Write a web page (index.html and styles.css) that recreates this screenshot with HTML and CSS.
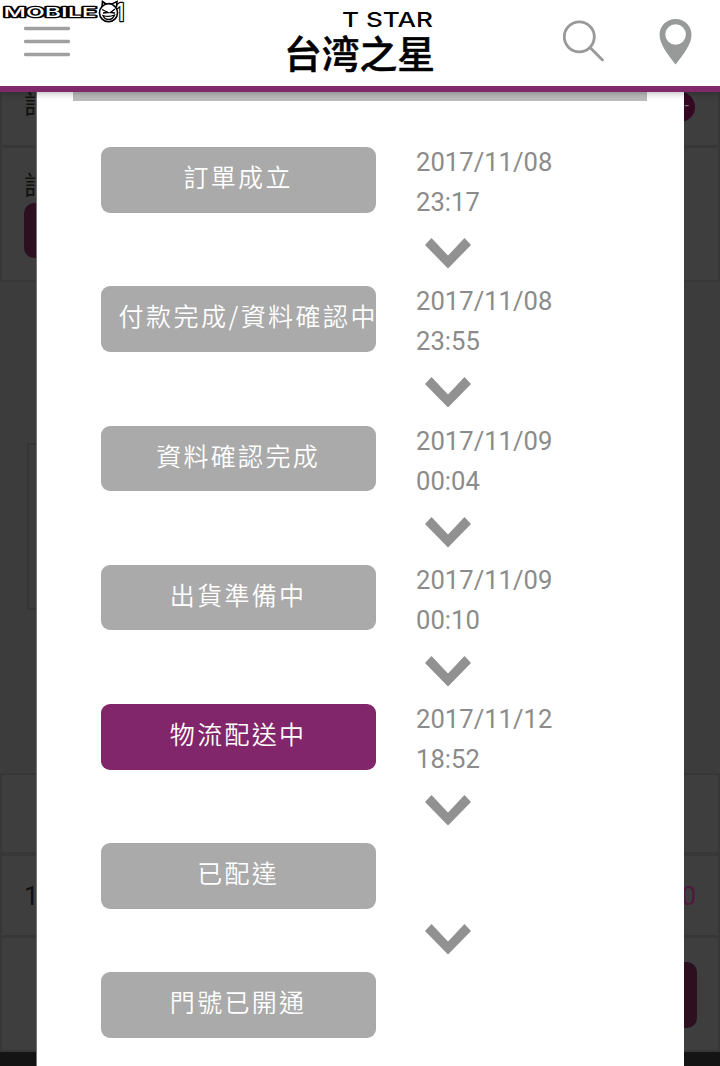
FILE: index.html
```html
<!DOCTYPE html>
<html lang="zh-Hant">
<head>
<meta charset="utf-8">
<title>台灣之星</title>
<link rel="stylesheet" href="styles.css">
</head>
<body>
<div class="screen">
  <header class="header">
    <svg class="menu" width="50" height="34" viewBox="0 0 50 34"><path d="M3.500 4.500H46.500M3.500 17.500H46.500M3.500 30.500H46.500"/></svg>
    <svg class="brand" width="160" height="70" viewBox="0 0 160 70">
      <text class="brand-en" x="62" y="17.300" textLength="91" lengthAdjust="spacingAndGlyphs">T STAR</text>
      <text class="brand-zh" x="4" y="58.300" textLength="151" lengthAdjust="spacingAndGlyphs">台湾之星</text>
    </svg>
    <svg class="search" width="46" height="46" viewBox="0 0 46 46"><circle cx="18.300" cy="18.800" r="15"/><path d="M29 29.500L41.500 42"/></svg>
    <svg class="pin" width="34" height="48" viewBox="0 0 34 48"><path fill-rule="evenodd" d="M16.600 1C7.500 1 .6 8 .6 16.700C.6 26 8 35.500 16.600 46.500C25.200 35.500 32.500 26 32.500 16.700C32.500 8 25.700 1 16.600 1ZM16.600 6.200A10.300 10.300 0 1 1 16.600 26.800A10.300 10.300 0 1 1 16.600 6.200Z"/></svg>
    <svg class="watermark" width="136" height="30" viewBox="0 0 136 30">
      <text class="wm-text" x="3.500" y="16.600" textLength="93" lengthAdjust="spacingAndGlyphs">MOBILE</text>
      <text class="wm-one" x="115.500" y="20.500" textLength="9" lengthAdjust="spacingAndGlyphs">1</text>
      <g class="mascot">
        <path d="M102 7L102.500 1.500L106 4Q109 3 112 4L117 1.500L116.500 7"/>
        <circle cx="108.500" cy="12.700" r="9"/>
        <path class="face" d="M102 9.500L108 12.500L103 13M115 9L110.500 12.500L115 13M103 15.500Q109 17.500 114.500 15Q113 19.500 108.500 19.500Q104.500 19.500 103 15.500Z"/>
      </g>
    </svg>
  </header>

  <main class="page">
    <section class="cell cell-first"><span class="label">訂</span><span class="round">-</span></section>
    <section class="cell cell-order"><span class="label">訂</span><span class="button-left"></span></section>
    <section class="gap"><div class="frame"></div></section>
    <section class="cell cell-head"></section>
    <section class="cell cell-item"><span class="count">1</span><span class="price">0</span></section>
    <section class="cell cell-action"><span class="button-right"></span></section>
    <footer class="foot"></footer>
  </main>

  <div class="modal">
    <div class="modal-strip"></div>
    <ol class="steps">
      <li class="step"><div class="status">訂單成立</div><div class="meta"><div class="time">2017/11/08<br>23:17</div><svg class="chevron" width="46" height="31"><path d="M0 7L6.500 0L23 17.500L39.500 0L46 7L23 30.500Z"/></svg></div></li>
      <li class="step"><div class="status status-long">付款完成/資料確認中</div><div class="meta"><div class="time">2017/11/08<br>23:55</div><svg class="chevron" width="46" height="31"><path d="M0 7L6.500 0L23 17.500L39.500 0L46 7L23 30.500Z"/></svg></div></li>
      <li class="step"><div class="status">資料確認完成</div><div class="meta"><div class="time">2017/11/09<br>00:04</div><svg class="chevron" width="46" height="31"><path d="M0 7L6.500 0L23 17.500L39.500 0L46 7L23 30.500Z"/></svg></div></li>
      <li class="step"><div class="status">出貨準備中</div><div class="meta"><div class="time">2017/11/09<br>00:10</div><svg class="chevron" width="46" height="31"><path d="M0 7L6.500 0L23 17.500L39.500 0L46 7L23 30.500Z"/></svg></div></li>
      <li class="step"><div class="status status-current">物流配送中</div><div class="meta"><div class="time">2017/11/12<br>18:52</div><svg class="chevron" width="46" height="31"><path d="M0 7L6.500 0L23 17.500L39.500 0L46 7L23 30.500Z"/></svg></div></li>
      <li class="step"><div class="status">已配達</div><div class="meta"><div class="time"></div><svg class="chevron" width="46" height="31"><path d="M0 7L6.500 0L23 17.500L39.500 0L46 7L23 30.500Z"/></svg></div></li>
      <li class="step"><div class="status">門號已開通</div></li>
    </ol>
  </div>
</div>
</body>
</html>
```
FILE: styles.css
```css
* { box-sizing: border-box; }
body { margin: 0; font-family: Roboto, "Noto Sans CJK TC", sans-serif; }
.screen { position: relative; width: 720px; height: 1066px; overflow: hidden; background: #3c3c3c; display: flex; flex-direction: column; }

/* header */
.header { position: relative; z-index: 3; flex: none; height: 92px; display: flex; align-items: flex-start; background: #fff; border-bottom: 6px solid #80296b; box-shadow: 0 1px 7px rgba(0,0,0,.3); }
.menu { margin: 24px 0 0 22px; }
.menu path { fill: none; stroke: #a0a0a0; stroke-width: 3.4; stroke-linecap: round; }
.brand { margin: 10px 0 0 208px; }
.brand-en { font: 500 20px Inter, sans-serif; }
.brand-zh { font: 500 37.500px "Noto Sans CJK JP", sans-serif; stroke: #000; stroke-width: .5; stroke-linejoin: round; }
.search { margin: 18px 0 0 121px; }
.search circle, .search path { fill: none; stroke: #979a98; stroke-width: 2.8; stroke-linecap: round; }
.pin { margin: 18px 0 0 52px; }
.pin path { fill: #979a98; }
.watermark { position: absolute; left: 0; top: 0; }
.wm-text, .wm-one { font: 500 12.500px Inter, sans-serif; fill: #fff; stroke: #000; stroke-width: 2.6; paint-order: stroke; stroke-linejoin: round; }
.wm-one { font-size: 24px; }
.mascot { fill: #fff; stroke: #000; stroke-width: 1.6; }
.face { stroke-width: 1.3; }

/* dimmed page behind the dialog */
.page { flex: 1; display: flex; flex-direction: column; }
.cell { display: flex; justify-content: space-between; border: 2px solid #373737; border-top-width: 0; background: #3e3e3e; }
.label { width: 24px; margin-left: 22px; font-size: 26px; line-height: 26px; color: #111; }
.cell-first { height: 56px; border-bottom-width: 3px; }
.round { width: 30px; height: 30px; margin-right: 23px; border-radius: 50%; background: #340823; color: #777; text-align: right; padding-right: 6px; line-height: 28px; }
.cell-order { position: relative; height: 134px; padding-top: 25px; }
.button-left { position: absolute; left: 22px; top: 55px; width: 40px; height: 55px; border-radius: 10px; background: #2c1020; }
.gap { height: 491px; padding: 161px 27px 0; }
.frame { width: 400px; height: 167px; border: 2px solid #353535; }
.cell-head { height: 83px; border-top-width: 2px; border-bottom-width: 4px; }
.cell-item { height: 82px; border-bottom-width: 3px; align-items: center; font-size: 26px; }
.count { margin-left: 22px; color: #111; }
.price { margin-right: 22px; color: #4d1a3b; }
.cell-action { height: 114px; padding-top: 24px; justify-content: flex-end; }
.button-right { width: 60px; height: 66px; margin-right: 21px; border-radius: 10px; background: #2c1020; }
.foot { flex: 1; background: #141414; }

/* order progress dialog */
.modal { position: absolute; z-index: 2; left: 36px; right: 36px; top: 92px; bottom: 0; padding-left: 37px; background: #fff; border-left: 1px solid #777; }
.modal-strip { width: 574px; height: 9px; margin-left: -1px; background: #bbb; }
.steps { list-style: none; margin: 41px 0 0; padding: 0 0 0 26.600px; }
.step { display: flex; gap: 40.500px; }
.status { flex: none; width: 275px; height: 65.500px; margin-top: 5px; border-radius: 9px; background: #aaa; color: #fff; text-align: center; font: 350 25px/59px "Noto Sans CJK TC", sans-serif; letter-spacing: 2.300px; white-space: nowrap; overflow: hidden; }
.status-long { text-align: left; padding-left: 18px; letter-spacing: 2.450px; }
.status-current { background: #82266b; }
.time { min-height: 69.300px; font-size: 25.600px; line-height: 40px; color: #8b8b8b; }
.chevron { display: block; margin: 16px 0 12.300px 9px; }
.chevron path { fill: #919191; }
```
